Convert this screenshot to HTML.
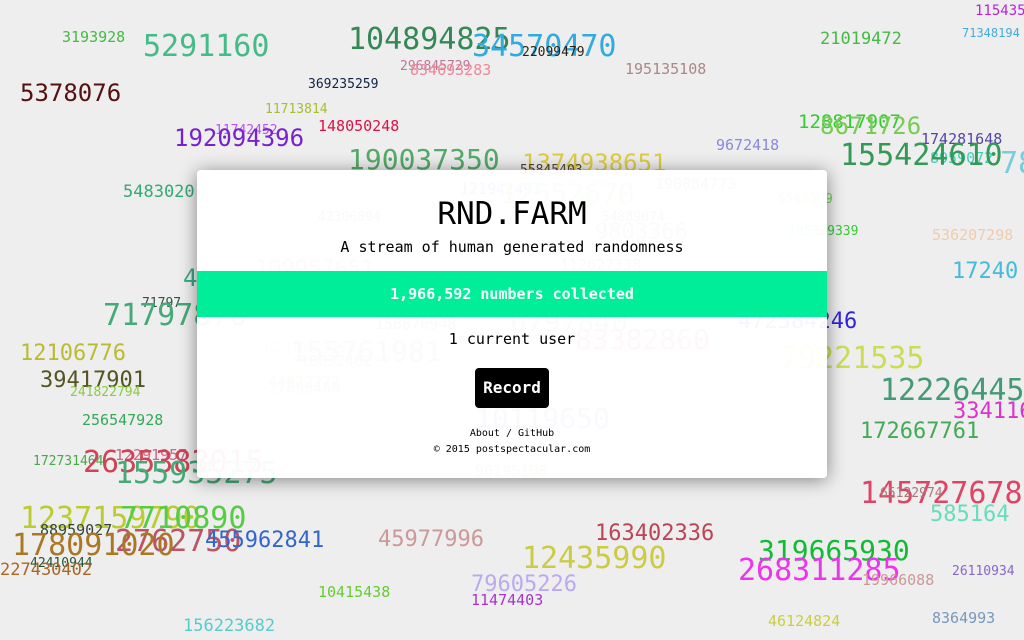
<!DOCTYPE html>
<html><head><meta charset="utf-8"><style>
html,body{margin:0;padding:0;width:1024px;height:640px;overflow:hidden;background:#eeeeee;}
body{position:relative;font-family:"DejaVu Sans Mono","Liberation Mono",monospace;}
.n{position:absolute;line-height:1;white-space:nowrap;}
.modal{position:absolute;left:197px;top:170px;width:630px;height:308px;background:rgba(255,255,255,0.96);border-radius:4px;box-shadow:0 2px 18px rgba(0,0,0,0.45);text-align:center;color:#000;}
.t{position:absolute;left:0;right:0;line-height:1;}
</style></head><body>
<div class="n" style="left:62px;top:30px;font-size:15px;color:#44bb44">3193928</div>
<div class="n" style="left:143px;top:32px;font-size:30px;color:#44bb88">5291160</div>
<div class="n" style="left:348px;top:25px;font-size:30px;color:#338855">104894825</div>
<div class="n" style="left:472px;top:32px;font-size:30px;color:#33aadd">34570470</div>
<div class="n" style="left:522px;top:46px;font-size:13px;color:#332211">22099479</div>
<div class="n" style="left:400px;top:60px;font-size:13px;color:#bb7799">296845729</div>
<div class="n" style="left:410px;top:63px;font-size:15px;color:#ee8899">834693283</div>
<div class="n" style="left:625px;top:62px;font-size:15px;color:#aa8888">195135108</div>
<div class="n" style="left:820px;top:31px;font-size:17px;color:#44bb44">21019472</div>
<div class="n" style="left:975px;top:4px;font-size:14px;color:#bb22dd">115435</div>
<div class="n" style="left:962px;top:27px;font-size:12px;color:#44aadd">71348194</div>
<div class="n" style="left:20px;top:81px;font-size:24px;color:#551111">5378076</div>
<div class="n" style="left:308px;top:78px;font-size:13px;color:#112244">369235259</div>
<div class="n" style="left:265px;top:103px;font-size:13px;color:#aabb33">11713814</div>
<div class="n" style="left:215px;top:124px;font-size:13px;color:#bb55ee">11742452</div>
<div class="n" style="left:318px;top:119px;font-size:15px;color:#dd1144">148050248</div>
<div class="n" style="left:174px;top:126px;font-size:24px;color:#7722cc">192094396</div>
<div class="n" style="left:798px;top:113px;font-size:19px;color:#33cc33">128817907</div>
<div class="n" style="left:820px;top:114px;font-size:24px;color:#77cc55">8671726</div>
<div class="n" style="left:921px;top:132px;font-size:15px;color:#5544aa">174281648</div>
<div class="n" style="left:716px;top:138px;font-size:15px;color:#8888dd">9672418</div>
<div class="n" style="left:930px;top:151px;font-size:15px;color:#44ccbb">8959072</div>
<div class="n" style="left:840px;top:141px;font-size:30px;color:#339955">155424610</div>
<div class="n" style="left:1000px;top:149px;font-size:30px;color:#77ccdd">7874</div>
<div class="n" style="left:348px;top:146px;font-size:28px;color:#55aa66">190037350</div>
<div class="n" style="left:522px;top:151px;font-size:24px;color:#ddcc44">1374938651</div>
<div class="n" style="left:520px;top:164px;font-size:13px;color:#554433">55845403</div>
<div class="n" style="left:123px;top:184px;font-size:17px;color:#33aa77">5483020</div>
<div class="n" style="left:460px;top:182px;font-size:15px;color:#3355ee">121942493</div>
<div class="n" style="left:500px;top:180px;font-size:28px;color:#88dd66">12552670</div>
<div class="n" style="left:655px;top:177px;font-size:15px;color:#777799">190084773</div>
<div class="n" style="left:778px;top:193px;font-size:13px;color:#66dd44">5569309</div>
<div class="n" style="left:318px;top:211px;font-size:13px;color:#558877">42306894</div>
<div class="n" style="left:602px;top:211px;font-size:13px;color:#558877">54889074</div>
<div class="n" style="left:595px;top:222px;font-size:22px;color:#779977">9803366</div>
<div class="n" style="left:788px;top:225px;font-size:13px;color:#33cc33">105239339</div>
<div class="n" style="left:932px;top:228px;font-size:15px;color:#f0ccaa">536207298</div>
<div class="n" style="left:952px;top:261px;font-size:22px;color:#44bbdd">17240</div>
<div class="n" style="left:183px;top:266px;font-size:24px;color:#33aa88">4</div>
<div class="n" style="left:255px;top:259px;font-size:22px;color:#cc7766">109957651</div>
<div class="n" style="left:560px;top:258px;font-size:15px;color:#777777">112627338</div>
<div class="n" style="left:142px;top:297px;font-size:13px;color:#335544">71797</div>
<div class="n" style="left:103px;top:301px;font-size:30px;color:#44aa77">71797870</div>
<div class="n" style="left:375px;top:317px;font-size:15px;color:#777799">158870948</div>
<div class="n" style="left:510px;top:308px;font-size:28px;color:#88aa88">6797840</div>
<div class="n" style="left:738px;top:311px;font-size:22px;color:#3322dd">472384246</div>
<div class="n" style="left:575px;top:326px;font-size:28px;color:#ee5566">83382860</div>
<div class="n" style="left:20px;top:343px;font-size:22px;color:#bbbb33">12106776</div>
<div class="n" style="left:265px;top:341px;font-size:15px;color:#bbdd66">624435595</div>
<div class="n" style="left:290px;top:338px;font-size:28px;color:#66aa77">155761981</div>
<div class="n" style="left:300px;top:354px;font-size:15px;color:#dd7788">10032462</div>
<div class="n" style="left:780px;top:344px;font-size:30px;color:#ccdd55">79221535</div>
<div class="n" style="left:40px;top:370px;font-size:22px;color:#555522">39417901</div>
<div class="n" style="left:268px;top:375px;font-size:15px;color:#99bb55">44672277</div>
<div class="n" style="left:268px;top:381px;font-size:15px;color:#99aa66">27699468</div>
<div class="n" style="left:70px;top:386px;font-size:13px;color:#88cc44">241822794</div>
<div class="n" style="left:880px;top:376px;font-size:30px;color:#449977">12226445</div>
<div class="n" style="left:82px;top:413px;font-size:15px;color:#33aa55">256547928</div>
<div class="n" style="left:475px;top:405px;font-size:28px;color:#6666dd">10119650</div>
<div class="n" style="left:953px;top:401px;font-size:22px;color:#dd33cc">334116</div>
<div class="n" style="left:860px;top:421px;font-size:22px;color:#44aa55">172667761</div>
<div class="n" style="left:33px;top:455px;font-size:13px;color:#44aa44">172731464</div>
<div class="n" style="left:115px;top:448px;font-size:15px;color:#cc6688">12291957</div>
<div class="n" style="left:83px;top:448px;font-size:30px;color:#cc4455">2635383015</div>
<div class="n" style="left:115px;top:459px;font-size:30px;color:#44aa77">155935275</div>
<div class="n" style="left:475px;top:464px;font-size:15px;color:#88aa44">96195108</div>
<div class="n" style="left:860px;top:479px;font-size:30px;color:#dd4466">145727678</div>
<div class="n" style="left:880px;top:487px;font-size:13px;color:#aa7777">65122974</div>
<div class="n" style="left:930px;top:504px;font-size:22px;color:#66ddbb">585164</div>
<div class="n" style="left:20px;top:504px;font-size:30px;color:#bbcc33">1237159790</div>
<div class="n" style="left:120px;top:504px;font-size:30px;color:#55cc44">7710890</div>
<div class="n" style="left:40px;top:523px;font-size:15px;color:#334433">88959027</div>
<div class="n" style="left:115px;top:527px;font-size:30px;color:#bb5566">2762750</div>
<div class="n" style="left:12px;top:531px;font-size:30px;color:#aa7722">178091020</div>
<div class="n" style="left:205px;top:530px;font-size:22px;color:#3366cc">455962841</div>
<div class="n" style="left:378px;top:529px;font-size:22px;color:#cc9999">45977996</div>
<div class="n" style="left:595px;top:523px;font-size:22px;color:#bb4455">163402336</div>
<div class="n" style="left:522px;top:544px;font-size:30px;color:#cccc44">12435990</div>
<div class="n" style="left:758px;top:537px;font-size:28px;color:#11bb33">319665930</div>
<div class="n" style="left:738px;top:556px;font-size:30px;color:#ee33ee">268311285</div>
<div class="n" style="left:30px;top:557px;font-size:13px;color:#225533">42410944</div>
<div class="n" style="left:0px;top:562px;font-size:17px;color:#aa6622">227430402</div>
<div class="n" style="left:952px;top:565px;font-size:13px;color:#8866cc">26110934</div>
<div class="n" style="left:862px;top:573px;font-size:15px;color:#cc9999">19966088</div>
<div class="n" style="left:318px;top:585px;font-size:15px;color:#66cc33">10415438</div>
<div class="n" style="left:471px;top:574px;font-size:22px;color:#bbaaee">79605226</div>
<div class="n" style="left:471px;top:593px;font-size:15px;color:#aa33cc">11474403</div>
<div class="n" style="left:768px;top:614px;font-size:15px;color:#cccc44">46124824</div>
<div class="n" style="left:932px;top:611px;font-size:15px;color:#7799bb">8364993</div>
<div class="n" style="left:183px;top:618px;font-size:17px;color:#55cccc">156223682</div>

<div class="modal">
  <div class="t" style="top:29px;font-size:31px;">RND.FARM</div>
  <div class="t" style="top:70px;font-size:15px;">A stream of human generated randomness</div>
  <div style="position:absolute;left:0;right:0;top:101px;height:46px;background:#00ee99;color:#fff;font-weight:bold;font-size:15px;line-height:46px;">1,966,592 numbers collected</div>
  <div class="t" style="top:162px;font-size:15px;">1 current user</div>
  <div style="position:absolute;left:278px;top:198px;width:74px;height:40px;background:#000;color:#fff;border-radius:4px;font-weight:bold;font-size:16px;line-height:40px;">Record</div>
  <div class="t" style="top:259px;font-size:10px;">About / GitHub</div>
  <div class="t" style="top:275px;font-size:10px;">© 2015 postspectacular.com</div>
</div>
</body></html>
